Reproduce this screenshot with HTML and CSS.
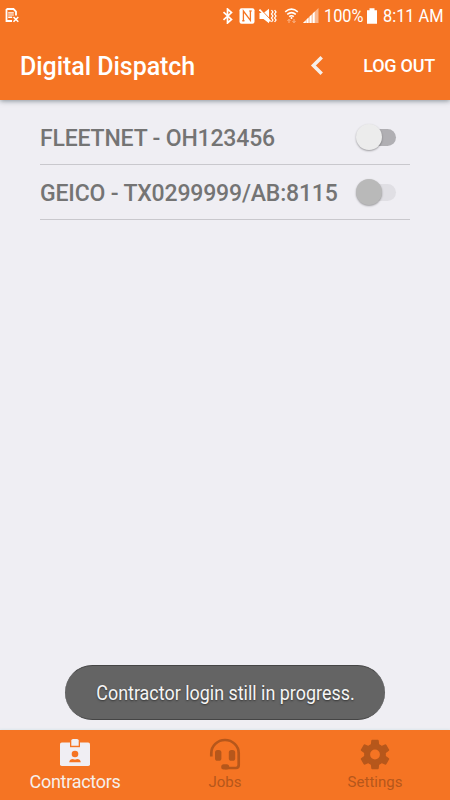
FILE: index.html
```html
<!DOCTYPE html>
<html lang="en">
  <head>
    <meta charset="UTF-8" />
    <meta name="viewport" content="width=device-width, initial-scale=1.0" />
    <title>Digital Dispatch</title>
    <link rel="stylesheet" href="styles.css">
  </head>
  <body>
    <header class="header">
      <div class="status-bar">
        <svg class="sim" width="15" height="16" viewBox="0 0 15 16">
          <path d="M1.500 1h7l2.500 2.500V7.500M1.500 1v12H7" fill="none" stroke="#fff" stroke-width="1.800" />
          <path d="M3.200 4.200h5.600v1.200H3.200zM3.200 6.400h5.600v1.200H3.200zM3.200 8.600h4v1.400h-4z" fill="#fff" />
          <path d="M8.500 9l4.800 4.800M13.300 9l-4.800 4.800" stroke="#fff" stroke-width="1.500" />
        </svg>
        <div class="status-icons">
          <svg width="12" height="16" viewBox="0 0 12 16">
            <path d="M1.500 4.200l8 7.200-4 3.600V1l4 3.600-8 7.200" fill="none" stroke="#fff" stroke-width="1.700" />
          </svg>
          <svg class="nfc" width="16" height="16" viewBox="0 0 16 16">
            <rect x="0.500" y="0.300" width="15" height="15.400" rx="2" fill="#fff" />
            <path d="M4.400 13.200V3l7 9.300V2.800" fill="none" stroke="#f57423" stroke-width="1.300" />
            <path d="M3 12.800h2.700M10.200 3h2.700" stroke="#f57423" stroke-width="1" />
          </svg>
          <svg class="mute" width="18" height="16" viewBox="0 0 18 16">
            <path d="M0.500 5h4L10 0.800v14.400L4.500 11h-4z" fill="#fff" />
            <path d="M1 .5L12.500 12.500" stroke="#f57423" stroke-width="1" />
            <path d="M.5 1.500l11 12" stroke="#fff" stroke-width="1.700" />
            <path d="M12.500 2l1.400 2-1.400 2 1.400 2-1.400 2 1.400 2-1.400 2M15.600 2l1.400 2-1.400 2 1.400 2-1.400 2 1.400 2-1.400 2" fill="none" stroke="#fff" stroke-width="1.300" />
          </svg>
          <svg class="wifi" width="15" height="16" viewBox="0 0 15 16">
            <path d="M1.200 3.800q6.300-5.200 12.600 0M3.200 6.300q4.300-3.500 8.600 0M5.200 8.600q2.300-1.800 4.600 0" fill="none" stroke="#fff" stroke-width="1.600" />
            <circle cx="7.500" cy="10" r="1" fill="#fff" />
            <path d="M5 15v-3.500M3.500 13L5 11.200 6.500 13M10 11v3.500M8.500 13l1.500 1.800 1.500-1.800" fill="none" stroke="#fab58b" stroke-width="1" />
          </svg>
          <svg class="signal" width="16" height="16" viewBox="0 0 16 16">
            <path d="M0 15L15.500 0v15z" fill="#fab78e" />
            <path d="M0 15l2.800-2.700V15zM3.500 15v-3.400l2-2V15zM6.600 15V8.600l2-2V15zM9.700 15V5.600l2-2V15z" fill="#fff" />
          </svg>
          <span class="battery-level">100%</span>
          <svg class="battery" width="10" height="16" viewBox="0 0 10 16">
            <path d="M0 2.200h2.500V.2h5v2H10v13.600H0z" fill="#fff" />
          </svg>
          <span class="clock">8:11 AM</span>
        </div>
      </div>
      <div class="toolbar">
        <h1>Digital Dispatch</h1>
        <svg class="back" width="14" height="22" viewBox="0 0 14 22">
          <path d="M11.700 2.200L3.400 10.500l8.300 8.300" fill="none" stroke="#f6efea" stroke-width="3.500" />
        </svg>
        <button class="logout">LOG OUT</button>
      </div>
    </header>

    <main class="content">
      <div class="row">
        <span class="name">FLEETNET - OH123456</span>
        <span class="switch"></span>
      </div>
      <div class="row">
        <span class="name">GEICO - TX0299999/AB:8115</span>
        <span class="switch disabled"></span>
      </div>
    </main>

    <div class="toast"><span>Contractor login still in progress.</span></div>

    <nav class="tabs">
      <div class="tab active">
        <svg width="32" height="32" viewBox="0 0 32 32">
          <rect x="1" y="4.500" width="30" height="23.500" rx="1.800" fill="#f0eef3" />
          <path d="M11 3.800h10v5.400H11z" fill="#f57423" />
          <path d="M12.300 7.800V2.600q0-1.700 1.700-1.700h4q1.700 0 1.700 1.700v5.200z" fill="#f0eef3" />
          <circle cx="16" cy="16" r="3.300" fill="#f57423" />
          <path d="M10.200 24.200q.5-3.300 3.800-3.300 2 1 4 0 3.300 0 3.800 3.300z" fill="#f57423" />
        </svg>
        <span>Contractors</span>
      </div>
      <div class="tab">
        <svg width="32" height="32" viewBox="0 0 32 32">
          <path d="M2.300 18.500v-3.300a13.700 13.200 0 0 1 27.400 0V27q0 3-2.800 3H16" fill="none" stroke="#b6571b" stroke-width="2.700" />
          <rect x="6" y="12" width="6.400" height="10.800" rx="2.600" fill="#b6571b" />
          <rect x="19.800" y="12" width="6.400" height="10.800" rx="2.600" fill="#b6571b" />
          <rect x="12.200" y="26.200" width="8" height="5.200" rx="2.500" fill="#b6571b" />
        </svg>
        <span>Jobs</span>
      </div>
      <div class="tab">
        <svg width="32" height="32" viewBox="0 0 32 32">
          <g fill="#b6571b">
            <path id="tooth" d="M12.200 3q0-1.200 1.200-1.200h5.200q1.200 0 1.200 1.200l.5 5h-8.600zM12.200 30q0 1.200 1.200 1.200h5.200q1.200 0 1.200-1.200l.5-5h-8.600z" />
            <use href="#tooth" transform="rotate(60 16 16.500)" />
            <use href="#tooth" transform="rotate(120 16 16.500)" />
          </g>
          <circle cx="16" cy="16.500" r="7.900" fill="none" stroke="#b6571b" stroke-width="6" />
        </svg>
        <span>Settings</span>
      </div>
    </nav>
  </body>
</html>
```
FILE: styles.css
```css
* {
  box-sizing: border-box;
}
body {
  display: flex;
  flex-direction: column;
  height: 100vh;
  margin: 0;
  overflow: hidden;
  position: relative;
  font-family: Roboto, "Liberation Sans", sans-serif;
  background-color: #efeef3;
}
.header {
  height: 100px;
  flex-shrink: 0;
  color: #fff;
  background-color: #f57423;
  box-shadow: 0 1px 5px rgba(50, 65, 75, 0.55);
}
.status-bar {
  display: flex;
  justify-content: space-between;
  align-items: center;
  height: 32px;
  padding: 0 7px 0 5px;
}
.status-icons {
  display: flex;
  align-items: center;
}
.nfc {
  margin-left: 5px;
}
.mute {
  margin-left: 4px;
}
.wifi {
  margin-left: 7px;
}
.signal {
  margin-left: 4px;
}
.battery-level, .clock {
  display: block;
  font-size: 19px;
  line-height: 32px;
  white-space: nowrap;
  transform-origin: 0 50%;
  transform: scaleX(0.86);
}
.battery-level {
  width: 40px;
  margin-left: 5px;
}
.battery {
  margin-left: 3px;
}
.clock {
  width: 60px;
  margin-left: 6px;
}
.toolbar {
  display: flex;
  align-items: center;
  height: 68px;
  padding: 0 15px 0 20px;
}
.toolbar h1 {
  flex: 1;
  margin: 0;
  font-size: 25px;
  font-weight: 500;
  letter-spacing: -0.05px;
}
.back {
  margin-right: 39px;
}
.logout {
  padding: 0 0 2px;
  border: none;
  background: none;
  color: #fff;
  font-family: inherit;
  font-size: 18px;
  font-weight: 500;
  letter-spacing: -0.25px;
  white-space: nowrap;
}
.content {
  flex: 1;
  padding: 10px 40px 0;
}
.row {
  display: flex;
  justify-content: space-between;
  align-items: center;
  height: 55px;
  padding-right: 14px;
  border-bottom: 1px solid #c9c8cd;
}
.name {
  padding-top: 2px;
  font-size: 23px;
  font-weight: 500;
  letter-spacing: -0.17px;
  color: #747474;
  white-space: nowrap;
}
.switch {
  display: flex;
  align-items: center;
  width: 34px;
  height: 17px;
  border-radius: 9px;
  background-color: #b0afb3;
}
.switch::before {
  content: "";
  flex-shrink: 0;
  width: 26px;
  height: 26px;
  margin-left: -6px;
  border-radius: 50%;
  background-color: #ececec;
  box-shadow: 0 1px 2px rgba(0, 0, 0, 0.35);
}
.switch.disabled {
  background-color: #e0dfe4;
}
.switch.disabled::before {
  background-color: #b9b9b9;
}
.toast {
  position: absolute;
  left: 65px;
  top: 665px;
  display: flex;
  align-items: center;
  justify-content: center;
  width: 320px;
  height: 55px;
  border: 1px solid #454545;
  border-width: 1px 0;
  border-radius: 28px;
  color: #f5f5f5;
  background-color: #646464;
}
.toast span {
  font-size: 21px;
  white-space: nowrap;
  text-shadow: 0 1px 2px #333;
  transform: scaleX(0.853);
}
.tabs {
  display: flex;
  height: 70px;
  flex-shrink: 0;
  background-color: #f57423;
  box-shadow: 0 -1px 2px #dce6ec;
}
.tab {
  flex: 1;
  display: flex;
  flex-direction: column;
  align-items: center;
  padding-top: 8px;
  font-size: 15px;
  color: #b6571b;
}
.tab svg {
  display: block;
}
.tab span {
  line-height: 20px;
  margin-top: 2px;
}
.tab.active {
  font-size: 18px;
  letter-spacing: -0.3px;
  color: #f6efea;
}
```
